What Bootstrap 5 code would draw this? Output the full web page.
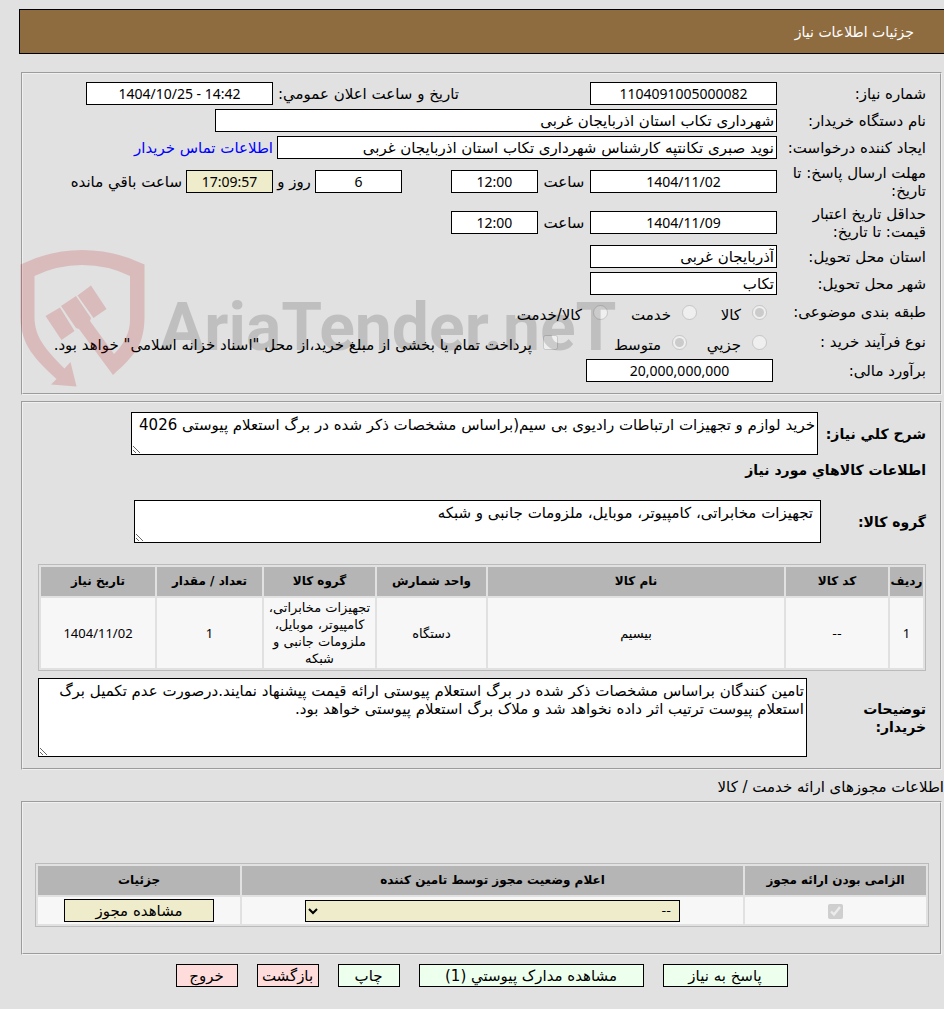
<!DOCTYPE html>
<html lang="fa" dir="rtl">
<head>
<meta charset="utf-8">
<meta name="viewport" content="width=device-width, initial-scale=1">
<title>جزئیات اطلاعات نیاز</title>
<link href="https://cdn.jsdelivr.net/npm/bootstrap@5.3.0/dist/css/bootstrap.min.css" rel="stylesheet">
<style>
  body { background: #e1e1e1; color: #000; font: 15px/18px "DejaVu Sans", sans-serif; padding: 9px 0 22px 19px; overflow-x: hidden; }
  .title-bar { height: 45px; background: #8f6c3f; border: 1px solid #000; border-right: 0; color: #fff; padding-right: 30px; font-size: 14px; }
  .panel { border: 2px groove #f0f0f0; margin: 0 2px; padding: 6px 14px 9px 15px; }
  .panel-first { margin-top: 18px; }
  .panel-goods { padding: 9px 14px 11px 15px; margin-top: 6px; }
  .panel-permits { padding: 60px 14px 26px 15px; margin-top: 5px; }
  .line { min-height: 27px; }
  .line-tall { min-height: 41px; }
  .line-pick { min-height: 30px; }
  .caption { flex: 0 0 149px; }
  .caption-wide { flex: 0 0 153px; }
  .box { border: 1px solid #000; border-radius: 0; background: #fff; color: #000; padding: 0 2px; font: inherit; height: 23px; flex: none; width: 187px; }
  .box:focus { box-shadow: none; border-color: #000; }
  .digits { font-family: "Noto Sans", sans-serif; text-align: center; }
  .box.digits { font-size: 14px; }
  .box-long { width: 562px; flex-shrink: 1; }
  .box-mid { width: 500px; flex-shrink: 1; }
  .box-short { width: 87px; }
  .box.sand, .sand { background: #eeeccb; }
  .between-52 { flex: 0 0 52px; }
  .between-42 { flex: 0 0 42px; }
  .second { flex: 0 0 186px; margin-right: 131px; }
  .days { margin-right: 49px; }
  .contact { color: #00f; text-decoration: none; }
  .pick { width: 15px; height: 15px; margin: 0; flex: none; }
  .pick-lead { margin-right: 10px; }
  .pick-name { padding: 5px 11px 0 0; white-space: nowrap; }
  .pn-s { flex: 0 0 55px; } .pn-sm { flex: 0 0 65px; } .pn-m { flex: 0 0 74px; } .pn-l { flex: 0 0 114px; }
  textarea.box { height: 43px; padding: 3px 2px; line-height: 18px; resize: both; min-height: 0; flex: 0 1 687px; width: 687px; }
  textarea.indent { padding-right: 7px; }
  textarea.tall { height: 79px; flex-basis: 769px; }
  .cap { font-size: 14px; font-weight: 700; }
  .cap-desc { flex: 0 0 108px; } .cap-group { flex: 0 0 105px; } .cap-note { flex: 0 0 119px; }
  .heading { font-size: 14px; line-height: 18px; font-weight: 700; margin: 6px 0 21px; }
  .data { border: 1px solid #bbb; border-collapse: separate; border-spacing: 2px; width: 100%; font-size: 13px; line-height: 17px; text-align: center; table-layout: fixed; }
  .goods { margin: 21px 0 7px; }
  .data th { background: #b5b5b5; height: 29px; padding: 0; font-size: 12px; white-space: nowrap; text-align: center; }
  .data td { background: #f7f7f7; padding: 1px; }
  .data .goods-row { height: 70px; }
  .data .permit-row { height: 27px; }
  .permits { margin: 0 -3px; width: calc(100% + 6px); }
  .status { width: 375px; max-width: 100%; height: 22px; border: 1px solid #000; background: #eeeccb; color: #000; border-radius: 0; font: inherit; opacity: .7; padding: 0 4px; display: block; margin: 0 auto; }
  .act { border: 1px solid #000; border-radius: 0; color: #000; font-size: 15px; height: 23px; padding: 1px 0 0; line-height: 20px; white-space: nowrap; }
  .act:hover { border-color: #000; }
  .actions { gap: 19px; margin-top: 9px; }
  .go { background: #edffed; }
  .stop { background: #ffdcdc; }
  .w-s { width: 62px; } .w-m { width: 125px; } .w-p { width: 150px; } .w-l { width: 225px; }
  .stamp { position: absolute; left: 1px; bottom: 5px; pointer-events: none; direction: ltr; }
  .stamp text { font-family: Roboto, sans-serif; font-weight: 700; direction: ltr; }
</style>
</head>
<body>
<header class="title-bar d-flex align-items-center">جزئیات اطلاعات نیاز</header>

<section class="position-relative">
<div class="panel panel-first">
  <div class="line d-flex align-items-center">
    <label class="caption" for="num">شماره نیاز:</label>
    <input id="num" class="form-control box digits" value="1104091005000082" readonly>
    <label class="second text-nowrap" for="pub">تاریخ و ساعت اعلان عمومي:</label>
    <input id="pub" class="form-control box digits" dir="ltr" value="1404/10/25 - 14:42" readonly>
  </div>
  <div class="line d-flex align-items-center">
    <label class="caption" for="org">نام دستگاه خریدار:</label>
    <input id="org" class="form-control box box-long" value="شهرداری تکاب استان اذربایجان غربی" readonly>
  </div>
  <div class="line d-flex align-items-center">
    <label class="caption" for="maker">ایجاد کننده درخواست:</label>
    <input id="maker" class="form-control box box-mid" value="نوید صبری تکانتپه کارشناس شهرداری تکاب استان اذربایجان غربی" readonly>
    <a class="contact me-1 text-nowrap" href="#">اطلاعات تماس خریدار</a>
  </div>
  <div class="line line-tall d-flex align-items-center">
    <label class="caption" for="due">مهلت ارسال پاسخ: تا<br>تاریخ:</label>
    <input id="due" class="form-control box digits" value="1404/11/02" readonly>
    <label class="between-52 text-center" for="dueh">ساعت</label>
    <input id="dueh" class="form-control box box-short digits" value="12:00" readonly>
    <input id="days" class="form-control box box-short days digits" value="6" readonly>
    <label class="between-42 text-center text-nowrap" for="days">روز و</label>
    <input id="left" class="form-control box box-short sand digits" value="17:09:57" readonly>
    <label class="me-1 text-nowrap" for="left">ساعت باقي مانده</label>
  </div>
  <div class="line line-tall d-flex align-items-center">
    <label class="caption" for="valid">حداقل تاریخ اعتبار<br>قیمت: تا تاریخ:</label>
    <input id="valid" class="form-control box digits" value="1404/11/09" readonly>
    <label class="between-52 text-center" for="validh">ساعت</label>
    <input id="validh" class="form-control box box-short digits" value="12:00" readonly>
  </div>
  <div class="line d-flex align-items-center">
    <label class="caption" for="prov">استان محل تحویل:</label>
    <input id="prov" class="form-control box" value="آذربایجان غربی" readonly>
  </div>
  <div class="line d-flex align-items-center">
    <label class="caption" for="city">شهر محل تحویل:</label>
    <input id="city" class="form-control box" value="تکاب" readonly>
  </div>
  <div class="line line-pick d-flex align-items-center">
    <span class="caption">طبقه بندی موضوعی:</span>
    <input class="pick pick-lead" type="radio" name="kind" id="k1" checked disabled><label class="pick-name pn-s" for="k1">کالا</label>
    <input class="pick" type="radio" name="kind" id="k2" disabled><label class="pick-name pn-m" for="k2">خدمت</label>
    <input class="pick" type="radio" name="kind" id="k3" disabled><label class="pick-name" for="k3">کالا/خدمت</label>
  </div>
  <div class="line line-pick d-flex align-items-center">
    <span class="caption">نوع فرآیند خرید :</span>
    <input class="pick pick-lead" type="radio" name="proc" id="p1" disabled><label class="pick-name pn-sm" for="p1">جزیي</label>
    <input class="pick" type="radio" name="proc" id="p2" checked disabled><label class="pick-name pn-l" for="p2">متوسط</label>
    <input class="pick" type="checkbox" id="tr" disabled><label class="pick-name" for="tr">پرداخت تمام یا بخشی از مبلغ خرید،از محل "اسناد خزانه اسلامی" خواهد بود.</label>
  </div>
  <div class="line d-flex align-items-center">
    <label class="caption-wide" for="est">برآورد مالی:</label>
    <input id="est" class="form-control box digits" value="20,000,000,000" readonly>
  </div>
</div>
<svg class="stamp" width="602" height="142" viewBox="20 248 602 142" aria-hidden="true">
  <g fill="#b40000" fill-opacity=".17">
    <path d="M20.500 264.500Q50 250 82 250Q115 250 144.500 264.500V318C144 345 135 355 113 375L79 329L76 328L61 306L76 296L91 318L90 321L114 354Q130 338 130 320V276Q108 265 82 265Q57 265 34.500 276V318C35 337 45 349 64.500 368.500L70.500 362L76.500 386.500L51 384.500L56.500 379C35 359 21 345 20.500 318Z"/>
    <path d="M45.500 316L60 307.500L74.500 331L61.500 340ZM77.500 295.500L91 285.500L106.500 309L93.500 318Z"/>
  </g>
  <text x="160" y="350" font-size="66" fill="#000" fill-opacity=".15">AriaTender.neT</text>
</svg>
</section>

<section class="panel panel-goods">
  <div class="d-flex align-items-center">
    <label class="cap cap-desc text-nowrap" for="desc">شرح کلي نیاز:</label>
    <textarea id="desc" class="form-control box" readonly>خرید لوازم و تجهیزات ارتباطات رادیوی بی سیم(براساس مشخصات ذکر شده در برگ استعلام پیوستی 4026</textarea>
  </div>
  <h2 class="heading">اطلاعات کالاهاي مورد نیاز</h2>
  <div class="d-flex align-items-center">
    <label class="cap cap-group" for="grp">گروه کالا:</label>
    <textarea id="grp" class="form-control box indent" readonly>تجهیزات مخابراتی، کامپیوتر، موبایل، ملزومات جانبی و شبکه</textarea>
  </div>
  <table class="data goods">
    <colgroup><col style="width:33px"><col style="width:102px"><col><col style="width:109px"><col style="width:111px"><col style="width:105px"><col style="width:114px"></colgroup>
    <thead><tr><th>ردیف</th><th>کد کالا</th><th>نام کالا</th><th>واحد شمارش</th><th>گروه کالا</th><th>تعداد / مقدار</th><th>تاریخ نیاز</th></tr></thead>
    <tbody><tr class="goods-row"><td class="digits">1</td><td>--</td><td>بیسیم</td><td>دستگاه</td><td>تجهیزات مخابراتی، کامپیوتر، موبایل، ملزومات جانبی و شبکه</td><td class="digits">1</td><td class="digits">1404/11/02</td></tr></tbody>
  </table>
  <div class="d-flex align-items-center">
    <label class="cap cap-note" for="note">توضیحات<br>خریدار:</label>
    <textarea id="note" class="form-control box tall" readonly>تامین کنندگان براساس مشخصات ذکر شده در برگ استعلام پیوستی ارائه قیمت پیشنهاد نمایند.درصورت عدم تکمیل برگ استعلام پیوست ترتیب اثر داده نخواهد شد و ملاک برگ استعلام پیوستی خواهد بود.</textarea>
  </div>
</section>

<div class="mt-2">اطلاعات مجوزهای ارائه خدمت / کالا</div>
<section class="panel panel-permits">
  <table class="data permits">
    <colgroup><col style="width:181px"><col><col style="width:202px"></colgroup>
    <thead><tr><th>الزامی بودن ارائه مجوز</th><th>اعلام وضعیت مجوز توسط تامین کننده</th><th>جزئیات</th></tr></thead>
    <tbody><tr class="permit-row"><td><input class="pick align-middle" type="checkbox" checked disabled aria-label="الزامی بودن ارائه مجوز"></td>
      <td><select class="status" disabled aria-label="اعلام وضعیت مجوز"><option>--</option></select></td>
      <td><button class="btn act sand w-p d-block mx-auto" type="button">مشاهده مجوز</button></td></tr></tbody>
  </table>
</section>

<div class="actions d-flex justify-content-center">
  <button class="btn act go w-m" type="button">پاسخ به نیاز</button>
  <button class="btn act go w-l" type="button">مشاهده مدارک پیوستي (1)</button>
  <button class="btn act go w-s" type="button">چاپ</button>
  <button class="btn act stop w-s" type="button">بازگشت</button>
  <button class="btn act stop w-s" type="button">خروج</button>
</div>
<script src="https://cdn.jsdelivr.net/npm/bootstrap@5.3.0/dist/js/bootstrap.bundle.min.js"></script>
</body>
</html>
